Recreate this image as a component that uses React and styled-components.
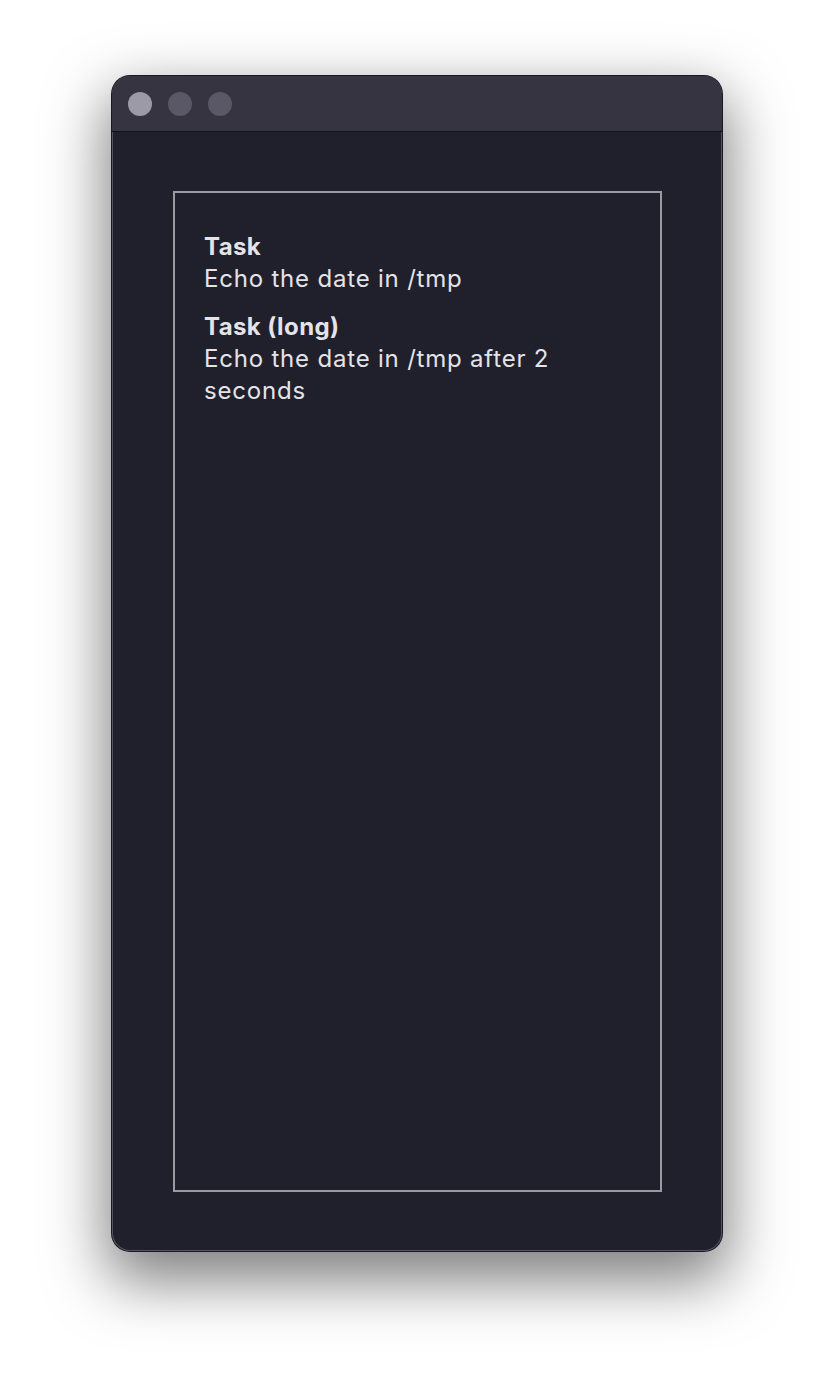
import React from "react";
import styled, { createGlobalStyle } from "styled-components";

const tasks = [
  { name: "Task", desc: "Echo the date in /tmp" },
  { name: "Task (long)", desc: "Echo the date in /tmp after 2 seconds" },
];

const Global = createGlobalStyle`
  html, body {
    margin: 0;
    background: #ffffff;
  }
  body {
    font-family: Inter, "Noto Sans", sans-serif;
  }
`;

export default function App() {
  return (
    <Page>
      <Global />
      <Window>
        <TitleBar>
          <Light $active />
          <Light />
          <Light />
        </TitleBar>
        <Body>
          <Panel>
            {tasks.map((t) => (
              <Item key={t.name}>
                <Name>{t.name}</Name>
                <Desc>{t.desc}</Desc>
              </Item>
            ))}
          </Panel>
        </Body>
      </Window>
    </Page>
  );
}

const Page = styled.div`
  width: 834px;
  height: 1400px;
  display: flex;
  justify-content: center;
  padding-top: 76px;
  box-sizing: border-box;
`;

const Window = styled.div`
  width: 610px;
  height: 1175px;
  display: flex;
  flex-direction: column;
  border-radius: 18px;
  overflow: hidden;
  background: #201f2c;
  box-shadow: 0 0 0 1px #1a1920, inset 0 0 0 1px #55535f,
    0 24px 60px 6px rgba(0, 0, 0, 0.5);
`;

const TitleBar = styled.div`
  height: 55px;
  flex-shrink: 0;
  display: flex;
  align-items: center;
  gap: 16px;
  padding-left: 16px;
  background: #363441;
  border-bottom: 1px solid #121118;
`;

const Light = styled.span`
  width: 24px;
  height: 24px;
  border-radius: 50%;
  background: ${(p) => (p.$active ? "#9d9aa8" : "#5a5866")};
`;

const Body = styled.div`
  flex: 1;
  display: flex;
  padding: 59px 60px 59px 61px;
`;

const Panel = styled.div`
  flex: 1;
  border: 2px solid #9b9aa3;
  padding: 38px 29px;
  display: flex;
  flex-direction: column;
  gap: 16px;
`;

const Item = styled.div`
  display: flex;
  flex-direction: column;
  color: #e4e3e8;
  font-size: 24px;
  line-height: 32px;
  letter-spacing: 0.8px;
`;

const Name = styled.div`
  font-weight: 700;
  letter-spacing: 0.4px;
`;

const Desc = styled.div`
  max-width: 380px;
`;
